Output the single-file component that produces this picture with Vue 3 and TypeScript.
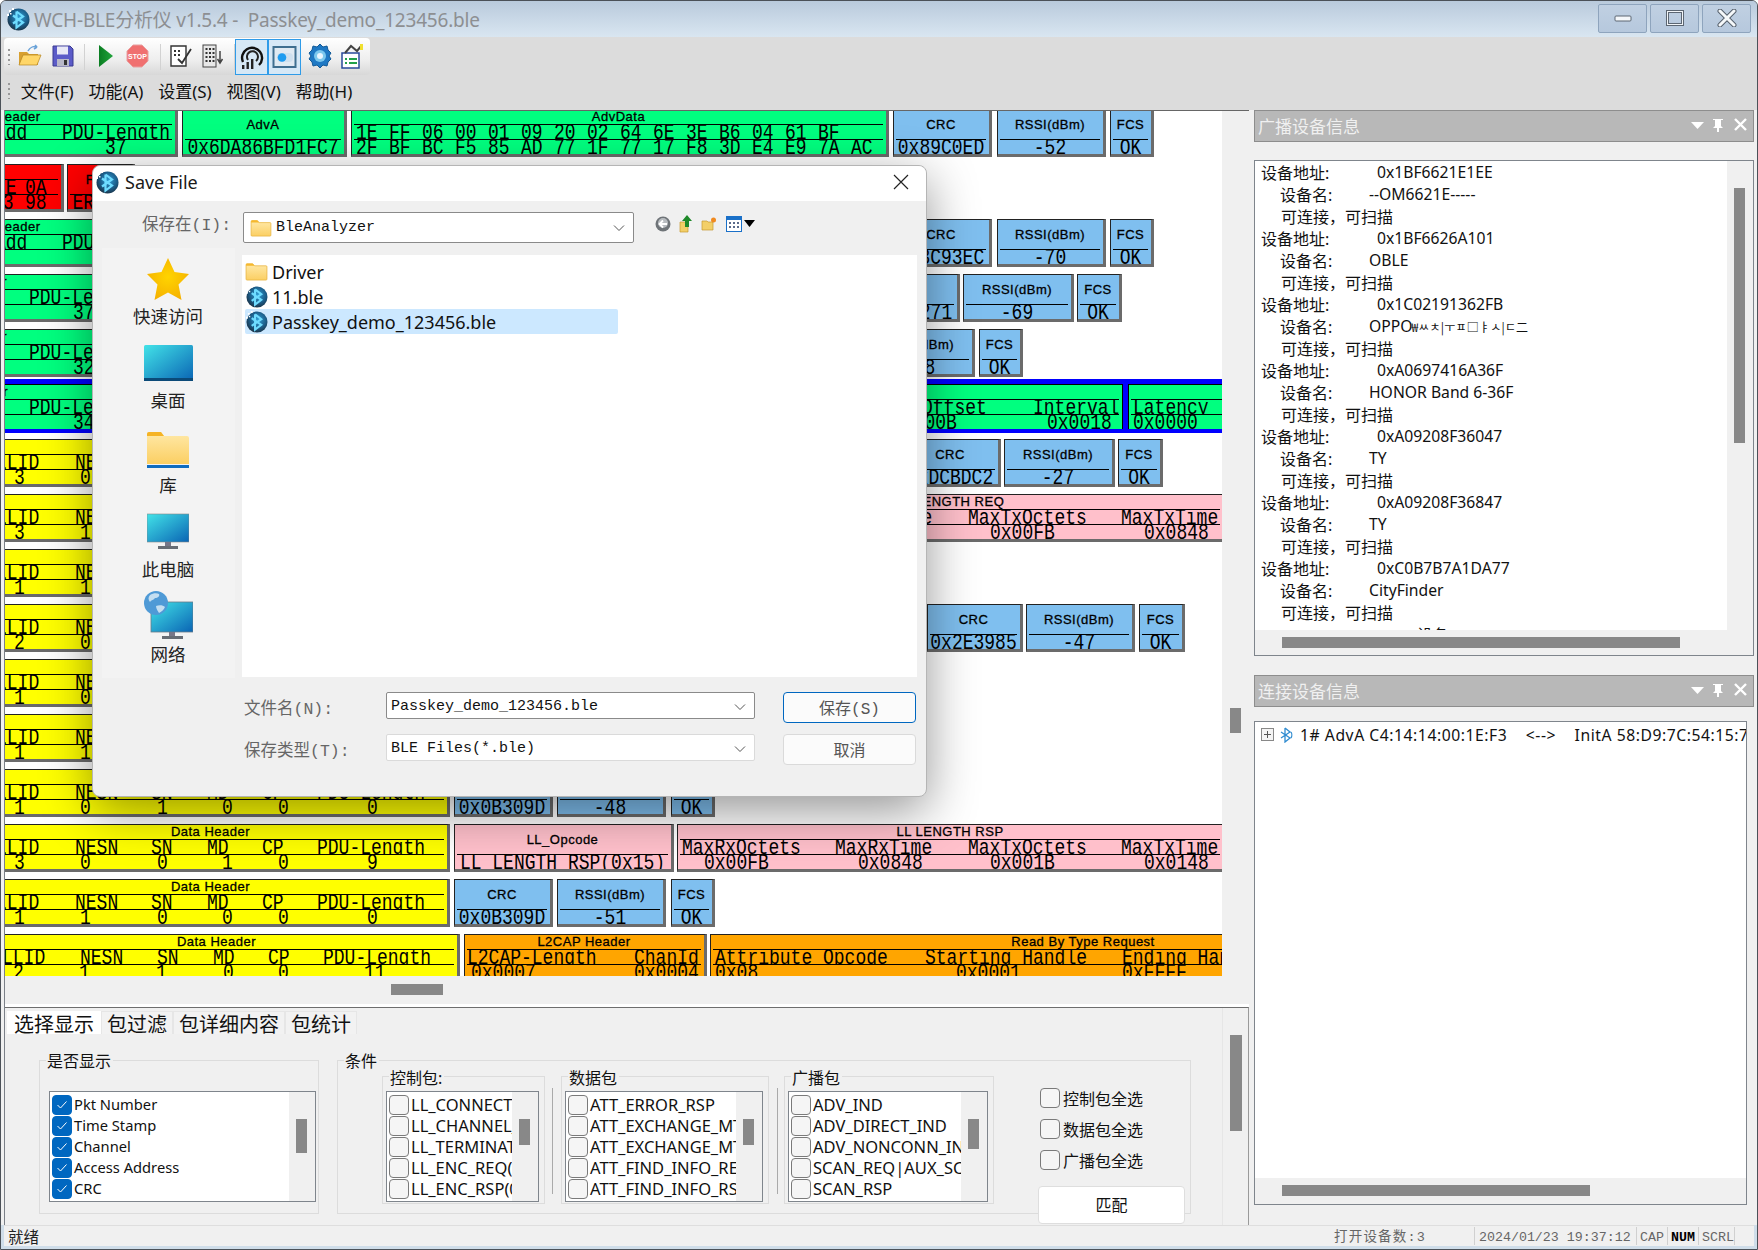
<script setup lang="ts">
type Col = [number, string]
type Color = 'g' | 'b' | 'y' | 'p' | 'o' | 'r'
interface Cell {
  x0: number
  x1: number
  c: Color
  title?: string
  labels?: Col[]
  values?: Col[]
  value?: string
  open?: boolean
}
interface Row { cells: Cell[]; blue?: boolean }

const hex = (x: number, line: string): Col[] => line.split(' ').map((t, i): Col => [x + i * 33, t])
const crc = (x0: number, x1: number, value: string): Cell => ({ x0, x1, c: 'b', title: 'CRC', value })
const rssi = (x0: number, x1: number, value: string): Cell => ({ x0, x1, c: 'b', title: 'RSSI(dBm)', value })
const fcs = (x0: number, x1: number): Cell => ({ x0, x1, c: 'b', title: 'FCS', value: 'OK' })
const tail = (a: number, v1: string, v2: string, gap = 0): Cell[] => [
  crc(a, a + 99 + gap, v1),
  rssi(a + 103 + gap, a + 212 + gap, v2),
  fcs(a + 217 + gap, a + 261 + gap),
]
const yLabels: Col[] = [[-4, 'LLID'], [75, 'NESN'], [151, 'SN'], [207, 'MD'], [262, 'CP'], [317, 'PDU-Length']]
const yValues = (v: string[]): Col[] => [[14, v[0]], [80, v[1]], [157, v[2]], [222, v[3]], [278, v[4]], [367, v[5]]]
const yellow = (v: string): Cell => ({ x0: -26, x1: 450, c: 'y', title: 'Data Header', labels: yLabels, values: yValues(v.split(' ')) })
const advHead: Cell = { x0: -173, x1: 178, c: 'g', title: 'Data Header', labels: [[-5, 'Add'], [62, 'PDU-Length']], values: [[105, '37']] }
const shiftHead = (v: string): Cell => ({ x0: -206, x1: 144, c: 'g', title: 'Data Header', labels: [[29, 'PDU-Length']], values: [[73, v]] })
const lengthCell = (title: string, v3: string, v4: string): Cell => ({
  x0: 677, x1: 1223, c: 'p', title, open: true,
  labels: [[682, 'MaxRxOctets'], [835, 'MaxRxTime'], [968, 'MaxTxOctets'], [1121, 'MaxTxTime']],
  values: [[704, '0x00FB'], [858, '0x0848'], [990, v3], [1144, v4]],
})

const rawRows: Row[] = [
  { cells: [
    advHead,
    { x0: 182, x1: 347, c: 'g', title: 'AdvA', value: '0x6DA86BFD1FC7' },
    { x0: 351, x1: 889, c: 'g', title: 'AdvData', labels: hex(356, '1E FF 06 00 01 09 20 02 64 6E 3E B6 04 61 BF'), values: hex(356, '2F BF BC F5 85 AD 77 1F 77 17 F8 3D E4 E9 7A AC') },
    crc(893, 992, '0x89C0ED'), rssi(997, 1106, '-52'), fcs(1110, 1154),
  ] },
  { cells: [
    { x0: -100, x1: 64, c: 'r', labels: [[-5, 'FE'], [25, '0A']], values: [[-8, 'B3'], [25, '98']] },
    { x0: 67, x1: 135, c: 'r', title: 'FCS', value: 'ERROR' },
  ] },
  { cells: [advHead, crc(893, 992, '0x3C93EC'), rssi(997, 1106, '-70'), fcs(1110, 1154)] },
  { cells: [shiftHead('37'), crc(861, 960, '0x8B8271'), rssi(963, 1074, '-69'), fcs(1077, 1122)] },
  { cells: [shiftHead('32'), rssi(866, 975, '-68'), fcs(979, 1023)] },
  { blue: true, cells: [
    shiftHead('34'),
    { x0: 860, x1: 1123, c: 'g', labels: [[922, 'Offset'], [1033, 'Interval']], values: [[892, '0x000B'], [1047, '0x0018']] },
    { x0: 1128, x1: 1300, c: 'g', labels: [[1133, 'Latency']], values: [[1133, '0x0000']], open: true },
  ] },
  { cells: [yellow('3 0 0 1 0 9'), crc(902, 1001, '0xDCBDC2'), rssi(1004, 1115, '-27'), fcs(1118, 1163)] },
  { cells: [yellow('3 1 0 1 0 9'), lengthCell('LL LENGTH REQ', '0x00FB', '0x0848')] },
  { cells: [yellow('1 1 0 0 0 0')] },
  { cells: [yellow('2 0 0 0 0 23'), crc(927, 1023, '0x2E3985'), rssi(1026, 1135, '-47'), fcs(1139, 1185)] },
  { cells: [yellow('1 0 1 0 0 0')] },
  { cells: [yellow('1 1 1 0 0 0')] },
  { cells: [yellow('1 0 1 0 0 0'), ...tail(454, '0x0B309D', '-48')] },
  { cells: [
    yellow('3 0 0 1 0 9'),
    { x0: 454, x1: 674, c: 'p', title: 'LL_Opcode', value: 'LL LENGTH RSP(0x15)' },
    lengthCell('LL LENGTH RSP', '0x001B', '0x0148'),
  ] },
  { cells: [yellow('1 1 0 0 0 0'), ...tail(454, '0x0B309D', '-51')] },
  { cells: [
    { x0: -24, x1: 460, c: 'y', title: 'Data Header',
      labels: [[2, 'LLID'], [80, 'NESN'], [157, 'SN'], [213, 'MD'], [268, 'CP'], [323, 'PDU-Length']],
      values: [[13, '2'], [79, '1'], [156, '1'], [223, '0'], [278, '0'], [364, '11']] },
    { x0: 464, x1: 707, c: 'o', title: 'L2CAP Header', labels: [[467, 'L2CAP-Length'], [634, 'ChanId']], values: [[471, '0x0007'], [634, '0x0004']] },
    { x0: 710, x1: 1456, c: 'o', title: 'Read By Type Request', open: true,
      labels: [[715, 'Attribute Opcode'], [925, 'Starting Handle'], [1122, 'Ending Handle']],
      values: [[715, '0x08'], [956, '0x0001'], [1122, '0xFFFF']] },
  ] },
]

const buildCols = (cell: Cell, cols?: Col[]) =>
  (cols ?? []).map(([x, text], i, all) => ({
    text,
    style: {
      marginLeft: i === 0 ? `${x - cell.x0 - 3}px` : '0',
      width: i < all.length - 1 ? `${all[i + 1][0] - x}px` : 'auto',
    },
  }))

const rows = rawRows.map((row) => ({
  blue: !!row.blue,
  cells: row.cells.map((cell, i) => ({
    ...cell,
    style: {
      marginLeft: `${cell.x0 - (i === 0 ? 5 : row.cells[i - 1].x1)}px`,
      width: `${cell.x1 - cell.x0}px`,
    },
    labelCols: buildCols(cell, cell.labels),
    valueCols: buildCols(cell, cell.values),
  })),
}))

const devices = [
  ['0x1BF6621E1EE', '--OM6621E-----'],
  ['0x1BF6626A101', 'OBLE'],
  ['0x1C02191362FB', 'OPPO'],
  ['0xA0697416A36F', 'HONOR Band 6-36F'],
  ['0xA09208F36047', 'TY'],
  ['0xA09208F36847', 'TY'],
  ['0xC0B7B7A1DA77', 'CityFinder'],
]
const caps = '可连接\uFF0C可扫描'

const showItems = ['Pkt Number', 'Time Stamp', 'Channel', 'Access Address', 'CRC']
const groups = [
  { name: '控制包:', cls: 's1', thumb: 'short', items: ['LL_CONNECTION_UPDATE', 'LL_CHANNEL_MAP_REQ', 'LL_TERMINATE_IND', 'LL_ENC_REQ(0x03)', 'LL_ENC_RSP(0x04)'] },
  { name: '数据包', cls: 's2', thumb: 'short', items: ['ATT_ERROR_RSP', 'ATT_EXCHANGE_MTU_REQ', 'ATT_EXCHANGE_MTU_RSP', 'ATT_FIND_INFO_REQ', 'ATT_FIND_INFO_RSP'] },
  { name: '广播包', cls: 's3', thumb: 'mid', items: ['ADV_IND', 'ADV_DIRECT_IND', 'ADV_NONCONN_IND', 'SCAN_REQ|AUX_SCAN_REQ', 'SCAN_RSP'] },
]
const selectAll = ['控制包全选', '数据包全选', '广播包全选']
const tabs = ['选择显示', '包过滤', '包详细内容', '包统计']
const windowTitle = 'WCH-BLE分析仪 v1.5.4 -  Passkey_demo_123456.ble'
const connText = '1# AdvA C4:14:14:00:1E:F3    <-->    InitA 58:D9:7C:54:15:7C'
</script>

<template>
  <div class="window">
    <svg class="defs" width="0" height="0" aria-hidden="true">
      <defs>
        <radialGradient id="bleBall" cx="55%" cy="40%" r="70%">
          <stop offset="0" stop-color="#2f9ed6" />
          <stop offset="0.55" stop-color="#1b5c88" />
          <stop offset="1" stop-color="#1a2430" />
        </radialGradient>
        <linearGradient id="fold" x1="0" y1="0" x2="0" y2="1">
          <stop offset="0" stop-color="#ffe9a8" />
          <stop offset="1" stop-color="#fbcf63" />
        </linearGradient>
        <linearGradient id="screen" x1="0" y1="0" x2="1" y2="1">
          <stop offset="0" stop-color="#42e3e8" />
          <stop offset="1" stop-color="#0a64b4" />
        </linearGradient>
        <symbol id="ble" viewBox="0 0 24 24">
          <circle cx="12.5" cy="12.5" r="11" fill="url(#bleBall)" />
          <path d="M10.5 4.5 17 9.500 7 16.5M7 8.5 17 15.5 10.5 20.5V4.500" fill="none" stroke="#6fdcff" stroke-width="2.200" />
          <path d="M3 3h2v2H3zM6 1h2v2H6zM1 7h2v2H1zM4 6h1.500v1.500H4z" fill="#fff" />
        </symbol>
        <symbol id="folder" viewBox="0 0 24 20">
          <path d="M1 3a1 1 0 0 1 1-1h6l2 2h12a1 1 0 0 1 1 1v13a1 1 0 0 1-1 1H2a1 1 0 0 1-1-1z" fill="url(#fold)" stroke="#e8b23e" stroke-width=".8" />
          <path d="M1 2.500a1 1 0 0 1 1-1h6l2 2.500H1z" fill="#f5b82e" />
        </symbol>
        <symbol id="chev" viewBox="0 0 12 8">
          <path d="M1 1.500 6 6.500 11 1.500" fill="none" stroke="#555" stroke-width="1" />
        </symbol>
      </defs>
    </svg>

    <header class="titlebar">
      <svg class="tlogo" width="24" height="24"><use href="#ble" /></svg>
      <span class="ttext">{{ windowTitle }}</span>
      <div class="wbtns">
        <div class="wbtn">
          <svg width="18" height="10" viewBox="0 0 18 10"><rect x="1" y="3" width="16" height="5" rx="1" fill="#f4f7fa" stroke="#5c6672" /></svg>
        </div>
        <div class="wbtn">
          <svg width="18" height="16" viewBox="0 0 18 16"><rect x="1.500" y="1.500" width="15" height="13" fill="none" stroke="#5c6672" stroke-width="3" /><rect x="1.500" y="1.500" width="15" height="13" fill="none" stroke="#f2f5f8" stroke-width="1" /></svg>
        </div>
        <div class="wbtn">
          <svg width="20" height="18" viewBox="0 0 20 18"><path d="M3 2 17 16M17 2 3 16" stroke="#56606c" stroke-width="5" stroke-linecap="round" /><path d="M3 2 17 16M17 2 3 16" stroke="#f5f8fa" stroke-width="3" stroke-linecap="round" /></svg>
        </div>
      </div>
    </header>

    <div class="band">
      <div class="toolbar">
        <i class="grip"></i>
        <svg class="t g6" width="24" height="24" viewBox="0 0 24 24"><path d="M1 8h8l2 2h9v11H1z" fill="#d8a030" /><path d="M1 21 5 11h18l-4 10z" fill="#ffd668" stroke="#b58420" stroke-width=".7" /><path d="M10 7c2-4 6-5 9-4l-2-2M19 3l-3 2" fill="none" stroke="#6aa2d8" stroke-width="1.600" /></svg>
        <svg class="t g10" width="22" height="24" viewBox="0 0 22 24"><path d="M1 2h17l3 3v17H1z" fill="#5b5bc8" stroke="#3a3a90" /><rect x="5" y="2.500" width="11" height="8" fill="#e8e8f6" /><rect x="5" y="15" width="12" height="7" fill="#b8b8c8" /><rect x="12" y="16" width="3" height="5" fill="#333" /></svg>
        <i class="sep s10"></i>
        <svg class="t g14" width="14" height="24" viewBox="0 0 14 24"><defs><linearGradient id="pl" x1="0" y1="0" x2="1" y2="0"><stop offset="0" stop-color="#0a7d22" /><stop offset="1" stop-color="#22a53c" /></linearGradient></defs><path d="M0 1 14 12 0 23z" fill="url(#pl)" /></svg>
        <svg class="t g13" width="23" height="24" viewBox="0 0 23 24"><path d="M7 1h9l6 6v10l-6 6H7l-6-6V7z" fill="#f07070" stroke="#e8a0a0" /><text x="11.500" y="15" text-anchor="middle" class="stop">STOP</text></svg>
        <i class="sep s11"></i>
        <svg class="t g9" width="22" height="24" viewBox="0 0 22 24"><path d="M1 2h15v20H1z" fill="#fff" stroke="#333" stroke-width="1.400" /><path d="M4 6h2v2H4zM8 6h2v2H8zM4 10h2v2H4zM8 10h2v2H8z" fill="#333" /><path d="M8 15 12 19 21 5" fill="none" stroke="#333" stroke-width="1.800" /></svg>
        <svg class="t g10" width="22" height="24" viewBox="0 0 22 24"><rect x="1" y="1" width="13" height="22" fill="#e8e8e8" stroke="#444" /><path d="M3.500 4h2v2h-2zM7 4h2v2H7zM10.500 4h2v2h-2zM3.500 8h2v2h-2zM7 8h2v2H7zM10.500 8h2v2h-2zM3.500 12h2v2h-2zM7 12h2v2H7zM10.500 12h2v2h-2zM3.500 16h2v2h-2zM7 16h2v2H7zM10.500 16h2v2h-2z" fill="#333" /><path d="M18 7V18M15.500 15 18 19l2.500-4" fill="none" stroke="#444" stroke-width="1.500" /></svg>
        <i class="sep s10"></i>
        <div class="tg">
          <svg width="26" height="26" viewBox="0 0 26 26"><path d="M4 18A10 10 0 1 1 20 21" fill="none" stroke="#111" stroke-width="2.400" /><path d="M9 16A5.500 5.500 0 1 1 17 17" fill="none" stroke="#222" stroke-width="2" /><path d="M3 25v-4h2.400v4zM7.500 25v-7h2.400v7zM12 25v-10h2.400v10z" fill="#222" /></svg>
        </div>
        <div class="tg">
          <svg width="26" height="24" viewBox="0 0 26 24"><rect x="1.500" y="2" width="22" height="20" fill="#e0eaf2" stroke="#3f6f90" stroke-width="2" /><rect x="5" y="8" width="16" height="9" rx="4" fill="#cfe0ee" /><circle cx="10" cy="12.500" r="4.300" fill="#1e9cf0" /></svg>
        </div>
        <svg class="t g7" width="24" height="26" viewBox="0 0 24 26"><path d="M12 1l3 3 4-1 1 4 3 3-2 3 2 3-3 3-1 4-4-1-3 3-3-3-4 1-1-4-3-3 2-3-2-3 3-3 1-4 4 1z" fill="#1f79c4" stroke="#125a98" /><circle cx="12" cy="13" r="6" fill="#7cc8ee" /><circle cx="12" cy="13" r="3" fill="#e8f6ff" /></svg>
        <svg class="t g8" width="24" height="26" viewBox="0 0 24 26"><path d="M2 10h17v15H2z" fill="#fff" stroke="#2a4a9a" stroke-width="1.500" /><path d="M5 15h2v2H5zM5 19h2v2H5zM9 15h8v2H9zM9 19h8v2H9z" fill="#22a04a" /><path d="M5 10l6-7 6 5 5-6" fill="none" stroke="#444" stroke-width="2" /><path d="M20 1h3v6h-3z" fill="#f0e030" /></svg>
      </div>
      <nav class="menu">
        <i class="grip"></i>
        <span>文件(F)</span><span>功能(A)</span><span>设置(S)</span><span>视图(V)</span><span>帮助(H)</span>
      </nav>
    </div>

    <main class="main">
      <section class="leftcol">
        <div class="view">
          <div class="packets">
            <div v-for="(row, ri) in rows" :key="ri" class="row" :class="{ blue: row.blue }">
              <div
                v-for="(cell, ci) in row.cells"
                :key="ci"
                class="cell"
                :class="[cell.c, { open: cell.open }]"
                :style="cell.style"
              >
                <template v-if="cell.value">
                  <div class="ctitle tall">{{ cell.title }}</div>
                  <div class="cline solo"><span class="m">{{ cell.value }}</span></div>
                </template>
                <template v-else>
                  <div class="ctitle">{{ cell.title }}</div>
                  <div class="cline ruled"><span v-for="(c, i) in cell.labelCols" :key="i" class="m" :style="c.style">{{ c.text }}</span></div>
                  <div class="cline"><span v-for="(c, i) in cell.valueCols" :key="i" class="m" :style="c.style">{{ c.text }}</span></div>
                </template>
              </div>
            </div>
          </div>
          <div class="vscroll"><div class="vthumb"></div></div>
        </div>
        <div class="hscroll"><div class="hthumb"></div></div>

        <div class="panel">
          <div class="panel-main">
            <div class="tabs">
              <span v-for="(t, i) in tabs" :key="t" class="tab" :class="{ active: i === 0 }">{{ t }}</span>
            </div>
            <div class="pane">
              <div class="group show">
                <span class="legend">是否显示</span>
                <div class="listbox lb-show">
                  <div class="items">
                    <div v-for="t in showItems" :key="t" class="item">
                      <span class="cb on"><svg width="12" height="10" viewBox="0 0 12 10"><path d="M1.500 5 4.500 8 10.500 1.500" fill="none" stroke="#fff" stroke-width="1" /></svg></span>
                      <span class="itxt">{{ t }}</span>
                    </div>
                  </div>
                  <div class="lsb"><div class="lthumb long"></div></div>
                </div>
              </div>
              <div class="group cond">
                <span class="legend">条件</span>
                <template v-for="(g, i) in groups" :key="g.name">
                  <i v-if="i > 0" class="vline" :class="'vl' + i"></i>
                  <div class="sub" :class="g.cls">
                    <span class="legend">{{ g.name }}</span>
                    <div class="listbox">
                      <div class="items">
                        <div v-for="t in g.items" :key="t" class="item">
                          <span class="cb"></span>
                          <span class="itxt">{{ t }}</span>
                        </div>
                      </div>
                      <div class="lsb"><div class="lthumb" :class="g.thumb"></div></div>
                    </div>
                  </div>
                </template>
                <div class="actions">
                  <div v-for="t in selectAll" :key="t" class="sel"><span class="cb big"></span><span>{{ t }}</span></div>
                  <div class="match">匹配</div>
                </div>
              </div>
            </div>
          </div>
          <div class="panel-vs"><div class="pthumb"></div></div>
        </div>
      </section>

      <aside class="rightcol">
        <div class="dock">
          <span class="dtitle">广播设备信息</span>
          <svg width="62" height="16" viewBox="0 0 62 16"><path d="M1 5h13l-6.500 7z" fill="#fff" /><path d="M23 2h10v1h-2v6l2 2h-4v4h-2v-4h-4l2-2V3h-2z" fill="#fff" /><path d="M45 2 56 13M56 2 45 13" stroke="#fff" stroke-width="2.400" /></svg>
        </div>
        <div class="devbox">
          <div class="devtop">
            <div class="devlist">
              <template v-for="d in devices" :key="d[0]">
                <div class="dl"><span class="k1">设备地址:</span><span>{{ d[0] }}</span></div>
                <div class="dl"><span class="k2">设备名:</span><span>{{ d[1] }}</span><span v-if="d[1] === 'OPPO'" class="junk">₩ㅆㅊ|ㅜㅍ□ㅑㅅ|ㄷ二</span></div>
                <div class="dl"><span class="k3">{{ caps }}</span></div>
              </template>
              <div class="dl"><span class="cut">设备</span></div>
            </div>
            <div class="devsb"><div class="devth"></div></div>
          </div>
          <div class="devh"><div class="devhth"></div></div>
        </div>

        <div class="dock second">
          <span class="dtitle">连接设备信息</span>
          <svg width="62" height="16" viewBox="0 0 62 16"><path d="M1 5h13l-6.500 7z" fill="#fff" /><path d="M23 2h10v1h-2v6l2 2h-4v4h-2v-4h-4l2-2V3h-2z" fill="#fff" /><path d="M45 2 56 13M56 2 45 13" stroke="#fff" stroke-width="2.400" /></svg>
        </div>
        <div class="connbox">
          <div class="conn">
            <span class="plus"></span>
            <svg class="btic" width="15" height="16" viewBox="0 0 15 16"><path d="M6 1 11 5 2 11M2 5 11 11 6 15V1M12 5c1 1.500 1 4.500 0 6" fill="none" stroke="#2f8bd0" stroke-width="1.300" /></svg>
            <span class="ctxt">{{ connText }}</span>
          </div>
          <div class="connh"><div class="connhth"></div></div>
        </div>
      </aside>
    </main>

    <footer class="status">
      <span class="ready">就绪</span>
      <span class="sc open-cnt">打开设备数:3</span>
      <span class="sc time">2024/01/23 19:37:12</span>
      <span class="sc cap">CAP</span>
      <span class="sc num">NUM</span>
      <span class="sc scrl">SCRL</span>
      <span class="sc rest"></span>
    </footer>

    <div class="dialog">
      <div class="dtl">
        <svg width="24" height="24"><use href="#ble" /></svg>
        <span>Save File</span>
        <svg class="dclose" width="16" height="16" viewBox="0 0 16 16"><path d="M1 1 15 15M15 1 1 15" stroke="#222" stroke-width="1.200" /></svg>
      </div>
      <div class="dtop">
        <span class="dlabel">保存在(I):</span>
        <div class="combo">
          <svg width="22" height="18"><use href="#folder" /></svg>
          <span class="mono">BleAnalyzer</span>
          <svg class="chev" width="12" height="8"><use href="#chev" /></svg>
        </div>
        <div class="dtools">
          <svg width="16" height="16" viewBox="0 0 16 16"><circle cx="8" cy="8" r="7.500" fill="#6f7478" /><circle cx="8" cy="7" r="5" fill="#b8bcc0" /><path d="M12 8H5M8 4.500 4.500 8 8 11.500" fill="none" stroke="#fff" stroke-width="1.800" /></svg>
          <svg width="14" height="19" viewBox="0 0 14 19"><path d="M1 8h8v10H1z" fill="#f3cf68" stroke="#c59a30" stroke-width=".7" /><path d="M8 1 13 7h-3v6H6V7H3z" fill="#1f8a2a" /></svg>
          <svg width="16" height="16" viewBox="0 0 16 16"><path d="M1 5h5l1 1h5v8H1z" fill="#f3cf68" stroke="#c59a30" stroke-width=".7" /><circle cx="12.500" cy="4" r="2.500" fill="#f08a20" /></svg>
          <svg class="vw" width="16" height="16" viewBox="0 0 16 16"><rect x=".5" y=".5" width="15" height="15" fill="#fff" stroke="#1a70c8" /><rect x="1" y="1" width="14" height="3" fill="#1a70c8" /><path d="M3 6h2v2H3zM7 6h2v2H7zM11 6h2v2h-2zM3 10h2v2H3zM7 10h2v2H7zM11 10h2v2h-2z" fill="#5a6a8a" /></svg>
          <svg class="dn" width="11" height="7" viewBox="0 0 11 7"><path d="M0 0h11L5.500 7z" fill="#000" /></svg>
        </div>
      </div>
      <div class="dmain">
        <div class="side">
          <div class="si i1">
            <svg width="44" height="44" viewBox="0 0 44 44"><defs><radialGradient id="star" cx="50%" cy="45%" r="60%"><stop offset="0" stop-color="#ffd400" /><stop offset="1" stop-color="#f5b000" /></radialGradient></defs><path d="M22 1 28.500 15 43 17 32.500 27.500 35.500 43 22 35.500 8.500 43 11.500 27.500 1 17 15.500 15z" fill="url(#star)" stroke-linejoin="round" /></svg>
            <span>快速访问</span>
          </div>
          <div class="si i2">
            <svg width="49" height="36" viewBox="0 0 49 36"><rect width="49" height="36" rx="1.500" fill="url(#screen)" /><rect y="33" width="49" height="3" fill="#0b4a78" /></svg>
            <span>桌面</span>
          </div>
          <div class="si i3">
            <svg width="42" height="37" viewBox="0 0 42 37"><path d="M0 3a2 2 0 0 1 2-2h12l3 4h23a2 2 0 0 1 2 2v26H0z" fill="url(#fold)" /><path d="M0 3a2 2 0 0 1 2-2h12l3 4H0z" fill="#f5b325" /><rect y="34" width="42" height="3" fill="#0f6cc0" /></svg>
            <span>库</span>
          </div>
          <div class="si i4">
            <svg width="42" height="37" viewBox="0 0 42 37"><rect y="1" width="42" height="28" fill="url(#screen)" stroke="#888" stroke-width=".6" /><rect x="18" y="29" width="6" height="5" fill="#778" /><rect x="11" y="33" width="20" height="3" fill="#666c74" /></svg>
            <span>此电脑</span>
          </div>
          <div class="si i5">
            <svg width="49" height="49" viewBox="0 0 49 49"><rect x="7" y="11" width="42" height="30" fill="url(#screen)" stroke="#6a7a88" stroke-width=".8" /><rect x="25" y="41" width="6" height="4" fill="#778" /><rect x="18" y="45" width="21" height="3" fill="#666c74" /><circle cx="12" cy="12" r="12" fill="#4f9ad6" /><path d="M6 4c3-2 7-2 9-1 1 2-1 4-4 4-1 2-4 2-5 4-2-2-2-5 0-7zM12 15c3-1 7-1 9 1-1 3-4 5-6 6-1-2-3-4-3-7z" fill="#eaf4fa" opacity=".75" /></svg>
            <span>网络</span>
          </div>
        </div>
        <div class="files">
          <div class="file"><svg width="23" height="19"><use href="#folder" /></svg><span>Driver</span></div>
          <div class="file"><svg width="23" height="23"><use href="#ble" /></svg><span>11.ble</span></div>
          <div class="file sel-file"><svg width="23" height="23"><use href="#ble" /></svg><span>Passkey_demo_123456.ble</span></div>
        </div>
      </div>
      <div class="dbottom">
        <span class="dlabel dk">文件名(N):</span>
        <div class="field mono focus"><span>Passkey_demo_123456.ble</span><svg class="chev" width="12" height="8"><use href="#chev" /></svg></div>
        <span class="btn primary">保存(S)</span>
        <span class="dlabel dk">保存类型(T):</span>
        <div class="field mono"><span>BLE Files(*.ble)</span><svg class="chev" width="12" height="8"><use href="#chev" /></svg></div>
        <span class="btn">取消</span>
      </div>
    </div>
  </div>
</template>

<style>
html, body { margin: 0; padding: 0; background: #fff; }
</style>

<style scoped>
* { box-sizing: border-box; }
.defs { position: absolute; }
.window {
  position: relative;
  width: 1758px;
  height: 1250px;
  overflow: hidden;
  display: flex;
  flex-direction: column;
  background: #cfdde9;
  font-family: "Noto Sans", "Noto Sans CJK SC", sans-serif;
  color: #111;
  border: 1px solid #4b5158;
  border-radius: 6px 6px 0 0;
}
.titlebar {
  height: 36px;
  flex: none;
  display: flex;
  align-items: center;
  padding-left: 5px;
  background: linear-gradient(#b9cadc, #d9e6f1);
}
.ttext {
  margin-left: 4px;
  white-space: pre;
  font-size: 19px;
  color: #8d8f92;
  letter-spacing: -0.2px;
}
.wbtns { margin-left: auto; margin-right: 6px; display: flex; gap: 3px; margin-top: -2px; }
.wbtn {
  width: 49px;
  height: 29px;
  border: 1px solid #8ea4bd;
  border-radius: 2px;
  background: linear-gradient(#c0d0e2, #b6c8dd);
  display: flex;
  align-items: center;
  justify-content: center;
}
.band {
  height: 73px;
  flex: none;
  background: #dcdcdc;
  padding-top: 1px;
}
.toolbar {
  margin-left: 3px;
  width: 366px;
  height: 37px;
  display: flex;
  align-items: center;
  padding-left: 4px;
  border-radius: 4px;
  background: linear-gradient(#ffffff, #eeeeee 60%, #d8d8d8);
}
.t { margin-top: -2px; }
.grip {
  width: 2px;
  height: 16px;
  flex: none;
  background: repeating-linear-gradient(#999 0 2px, transparent 2px 5px);
}
.g6 { margin-left: 8px; }
.g7 { margin-left: 7px; }
.g8 { margin-left: 8px; }
.g9 { margin-left: 9px; }
.g10 { margin-left: 10px; }
.g13 { margin-left: 13px; }
.g14 { margin-left: 14px; }
.sep { width: 1px; height: 26px; flex: none; background: #d2d2d2; }
.s10 { margin-left: 10px; }
.s11 { margin-left: 11px; }
.tg {
  width: 33px;
  height: 36px;
  flex: none;
  border: 1px solid #2f9be8;
  background: #d6e8f6;
  display: flex;
  align-items: center;
  justify-content: center;
}
.stop { font: 700 7px "Liberation Sans", sans-serif; fill: #fff; }
.menu {
  height: 31px;
  display: flex;
  align-items: center;
  padding-left: 7px;
  gap: 14.700px;
  font-size: 17px;
}
.menu .grip { margin-right: -4px; }
.main { flex: 1; min-height: 0; display: flex; background: #f0f0f0; padding-right: 3px; padding-left: 3px; }
.leftcol {
  width: 1245px;
  flex: none;
  display: flex;
  flex-direction: column;
  border-left: 1px solid #7b8088;
  background: #fff;
}
.view { display: flex; height: 866px; flex: none; border-top: 1px solid #666; }
.packets { width: 1217px; flex: none; overflow: hidden; background: #fff; }
.vscroll { flex: 1; background: #f0f0f0; padding: 597px 0 0 8px; }
.vthumb { width: 11px; height: 25px; background: #888; }
.hscroll { height: 28px; flex: none; background: #f0f0f0; padding: 8px 0 0 386px; }
.hthumb { width: 52px; height: 11px; background: #888; }
.row { display: flex; height: 48px; margin-top: 7px; }
.row:first-child { margin-top: -2px; }
.row.blue { margin-top: 2px; padding-top: 5px; height: 54px; margin-bottom: -1px; background: #0000ff; }
.cell {
  flex: none;
  height: 48px;
  border-top: 1px solid #222;
  border-left: 1px solid #222;
  border-right: 3px solid #6b6b6b;
  border-bottom: 3px solid #6b6b6b;
  overflow: hidden;
  color: #000;
}
.row.blue .cell { height: 45px; border: 0; border-top: 1px solid #000; border-left: 1px solid #000; border-right: 1px solid #000; }
.cell.open { border-right: 0; }
.g { background: #00ff7f; }
.b { background: #7fbfef; }
.y { background: #ffff00; }
.p { background: #ffc0cb; }
.o { background: #ffa500; }
.r { background: #ff0000; }
.ctitle {
  height: 15px;
  margin: 0 3px 0 2px;
  border-bottom: 1px solid #000;
  text-align: center;
  font: 400 13px/14px "Liberation Sans", sans-serif;
  -webkit-text-stroke: 0.3px #000;
  letter-spacing: 0.5px;
  white-space: nowrap;
}
.ctitle.tall { height: 30px; line-height: 29px; }
.cline {
  height: 15px;
  margin: 0 3px 0 2px;
  display: flex;
  overflow: hidden;
}
.cline.ruled { border-bottom: 1px solid #000; }
.cline.solo { justify-content: center; }
.m {
  display: inline-block;
  flex: none;
  height: 15px;
  font: 18px/18px "Liberation Mono", monospace;
  white-space: pre;
  transform: scaleY(1.18);
  transform-origin: bottom;
}
.panel {
  flex: 1;
  min-height: 0;
  margin-top: 3px;
  display: flex;
  background: #f0f0f0;
  border-top: 1px solid #6e6e6e;
  border-right: 1px solid #9a9a9a;
}
.panel-main { width: 1218px; flex: none; border-right: 1px solid #e6e6e6; overflow: hidden; }
.panel-vs { flex: 1; padding: 27px 0 0 7px; }
.pthumb { width: 12px; height: 96px; background: #888; }
.tabs { display: flex; height: 26px; padding: 3px 0 0 2px; gap: 0; }
.tab {
  padding: 0 5px;
  height: 23px;
  font-size: 20px;
  line-height: 25px;
  background: #f2f2f2;
  border: 1px solid #e6e6e6;
  border-bottom: 0;
  white-space: nowrap;
}
.tab.active { background: #fff; padding: 0 6px; border-color: #fff; }
.pane { display: flex; padding: 26px 0 0 34px; gap: 18px; }
.group, .sub { position: relative; border: 1px solid #dcdcdc; flex: none; }
.group { height: 154px; }
.show { width: 280px; padding: 30px 0 0 9px; }
.cond { width: 854px; display: flex; padding: 15px 0 0 44px; }
.legend {
  position: absolute;
  left: 6px;
  top: -9px;
  padding: 0 2px 0 1px;
  font-size: 16px;
  line-height: 20px;
  background: #f0f0f0;
  white-space: nowrap;
}
.group > .legend { top: -10px; }
.sub { height: 128px; padding: 14px 0 0 3px; }
.s1 { width: 163px; }
.s2 { width: 208px; }
.s3 { width: 210px; }
.vline { width: 1px; height: 106px; flex: none; margin: 12px 0 0 0; background: #aaa; }
.vl1 { margin-left: 7px; margin-right: 8px; }
.vl2 { margin-left: 8px; margin-right: 6px; }
.listbox {
  display: flex;
  height: 111px;
  width: calc(100% - 5px);
  border: 1px solid #7f858c;
  background: #fff;
}
.lb-show { width: 267px; }
.items { flex: 1; min-width: 0; overflow: hidden; padding: 2px 0 0 2px; }
.lsb { width: 26px; flex: none; background: #f0f0f0; padding: 27px 0 0 7px; }
.lthumb { width: 11px; background: #888; }
.lthumb.short { height: 26px; }
.lthumb.mid { height: 30px; }
.lthumb.long { height: 34px; }
.item { display: flex; align-items: center; height: 21px; white-space: nowrap; }
.cb {
  width: 20px;
  height: 20px;
  flex: none;
  border: 1px solid #7a7a7a;
  border-radius: 4px;
  display: flex;
  align-items: center;
  justify-content: center;
  background: #f5f5f5;
}
.cb.on { background: #0067c0; border-color: #0067c0; }
.itxt { margin-left: 2px; font-size: 14.700px; line-height: 19px; }
.sub .itxt { font-size: 16.500px; }
.actions { flex: 1; margin-left: 46px; margin-top: 12px; display: flex; flex-direction: column; }
.sel { display: flex; align-items: center; gap: 3px; height: 20px; margin-bottom: 11px; font-size: 16px; white-space: nowrap; }
.match {
  margin: 5px 0 0 -2px;
  width: 147px;
  height: 40px;
  border: 1px solid #dedede;
  border-radius: 4px;
  background: #fff;
  text-align: center;
  font-size: 16px;
  line-height: 36px;
}
.rightcol { flex: 1; min-width: 0; padding-left: 5px; display: flex; flex-direction: column; }
.dock {
  height: 32px;
  flex: none;
  background: #b8b8b8;
  border: 1px solid #8d8d8d;
  display: flex;
  align-items: center;
  justify-content: space-between;
  padding: 0 1px 2px 3px;
  width: 500px;
}
.dtitle { color: #f0f0f0; font-size: 17px; }
.dock.second { margin-top: 19px; }
.devbox {
  margin-top: 18px;
  height: 496px;
  flex: none;
  width: 500px;
  border: 1px solid #7f858c;
  display: flex;
  flex-direction: column;
  background: #f0f0f0;
}
.devtop { display: flex; height: 469px; flex: none; }
.devlist { width: 472px; flex: none; background: #fff; overflow: hidden; font-size: 15.700px; }
.dl { height: 22px; display: flex; align-items: center; white-space: pre; }
.dl span { flex: none; }
.k1 { width: 122px; padding-left: 6px; font-size: 16px; }
.k2 { width: 114px; padding-left: 25px; font-size: 16px; }
.k3 { padding-left: 26px; font-size: 16px; }
.junk { font-family: "Noto Sans CJK KR", sans-serif; font-size: 12px; letter-spacing: .2px; margin-left: -1px; }
.cut { padding-left: 162px; }
.devsb { flex: 1; padding: 27px 0 0 7px; }
.devth { width: 11px; height: 255px; background: #888; }
.devh { flex: 1; padding: 7px 0 0 27px; }
.devhth { width: 398px; height: 11px; background: #888; }
.connbox {
  margin-top: 14px;
  width: 493px;
  height: 484px;
  flex: none;
  border: 1px solid #7f858c;
  background: #fff;
  display: flex;
  flex-direction: column;
}
.conn { flex: none; display: flex; align-items: center; height: 25px; padding-left: 6px; overflow: hidden; white-space: pre; font-size: 15.700px; }
.plus {
  width: 13px;
  height: 13px;
  flex: none;
  margin-right: 5px;
  border: 1px solid #888;
  background: linear-gradient(#555, #555) center / 7px 1px no-repeat, linear-gradient(#555, #555) center / 1px 7px no-repeat, #f4f4f4;
}
.btic { flex: none; }
.ctxt { flex: none; margin-left: 6px; letter-spacing: .55px; }
.connh { margin-top: auto; height: 26px; background: #f0f0f0; padding: 7px 0 0 27px; }
.connhth { width: 308px; height: 11px; background: #888; }
.status {
  height: 21px;
  flex: none;
  margin: 0 3px;
  background: #f0f0f0;
  border-top: 1px solid #dedede;
  display: flex;
  align-items: center;
  font-size: 15px;
  margin-bottom: 3px;
}
.ready { flex: 1; padding-left: 4px; font-size: 15.500px; color: #222; }
.sc {
  font: 13.300px/22px "Liberation Mono", "Noto Sans CJK SC", monospace;
  color: #666;
  height: 18px;
  border-left: 1px solid #d0d0d0;
  white-space: nowrap;
}
.open-cnt { border-left: 0; width: 140px; font-size: 13.500px; letter-spacing: 1.2px; }
.time { width: 162px; padding-left: 4px; }
.cap { width: 31px; padding-left: 3px; }
.num { width: 31px; padding-left: 3px; color: #000; font-weight: 700; }
.scrl { width: 36px; padding-left: 3px; }
.rest { width: 20px; }
.dialog {
  position: absolute;
  left: 91px;
  top: 164px;
  width: 835px;
  height: 632px;
  background: #f0f0f0;
  border: 1px solid #b5b5b5;
  border-radius: 8px;
  box-shadow: 0 14px 50px rgba(0, 0, 0, .42);
  display: flex;
  flex-direction: column;
  color: #1a1a1a;
  isolation: isolate;
}
.dtl {
  height: 35px;
  flex: none;
  background: #fff;
  border-radius: 8px 8px 0 0;
  display: flex;
  align-items: center;
  padding: 0 0 4px 2px;
  font-size: 18px;
}
.dtl span { margin-left: 6px; }
.dclose { margin-left: auto; margin-right: 17px; }
.dtop { height: 47px; flex: none; display: flex; align-items: flex-start; padding: 11px 0 0 49px; }
.dlabel {
  font: 16.500px/28px "Liberation Mono", "Noto Sans CJK SC", monospace;
  color: #666;
  white-space: nowrap;
}
.dtop .dlabel { width: 101px; }
.mono { font: 15px "Liberation Mono", monospace; color: #111; }
.combo {
  width: 391px;
  height: 31px;
  display: flex;
  align-items: center;
  padding-left: 6px;
  gap: 5px;
  background: #fff;
  border: 1px solid #8a8a8a;
  border-radius: 2px;
}
.combo .mono { margin-left: -1px; }
.chev { margin-left: auto; margin-right: 8px; flex: none; }
.dtools { display: flex; align-items: center; margin-left: 21px; margin-top: 2px; gap: 8px; }
.dtools .vw { margin-left: 1px; }
.dtools .dn { margin-left: -6px; }
.dmain { display: flex; height: 430px; flex: none; padding-left: 9px; }
.side { width: 133px; flex: none; background: #f3f3f3; padding: 9px 1px 0 0; font-size: 17.500px; color: #222; }
.si { display: flex; flex-direction: column; align-items: center; line-height: 22px; }
.si span { display: block; }
.i1 span { margin-top: 4px; }
.i2 { margin-top: 18px; }
.i2 span { margin-top: 8px; }
.i3 { margin-top: 20px; }
.i3 span { margin-top: 6px; }
.i4 { margin-top: 17px; }
.i4 span { margin-top: 8px; }
.i5 { margin-top: 11px; }
.i5 span { margin-top: 3px; }
.files { margin: 7px 0 1px 7px; width: 675px; background: #fff; padding: 4px 0 0 3px; font-size: 18px; }
.file { display: flex; align-items: center; height: 25px; width: 373px; color: #111; }
.file svg { flex: none; margin-right: 4px; }
.sel-file { background: #cce8ff; border-radius: 2px; }
.dbottom {
  display: grid;
  grid-template-columns: 142px 369px 161px;
  row-gap: 10px;
  padding: 14px 0 0 151px;
}
.dbottom .field { width: 369px; }
.dk { margin-top: 4px; }
.field {
  height: 27px;
  display: flex;
  align-items: center;
  padding-left: 4px;
  background: #fff;
  border: 1px solid #dadada;
  border-radius: 2px;
}
.field.mono { padding-top: 2px; }
.field.focus { border-color: #8a8a8a; }
.btn {
  grid-column: 3;
  margin-left: 28px;
  width: 133px;
  height: 31px;
  border: 1px solid #dadada;
  border-radius: 4px;
  background: #fbfbfb;
  text-align: center;
  font: 16px/34px "Liberation Mono", "Noto Sans CJK SC", monospace;
  color: #555;
}
.btn.primary { border-color: #0067c0; }
</style>
